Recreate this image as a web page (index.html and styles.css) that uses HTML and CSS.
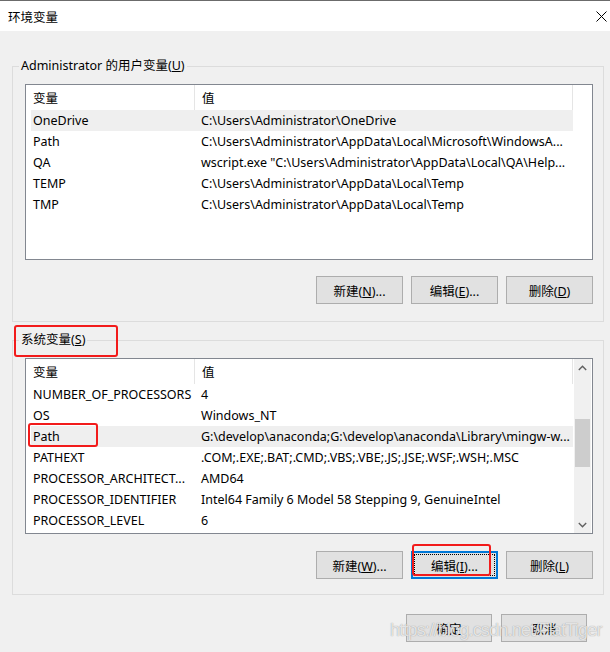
FILE: index.html
```html
<!DOCTYPE html>
<html lang="zh-CN">
<head>
  <meta charset="UTF-8">
  <title>环境变量</title>
  <link rel="stylesheet" href="styles.css">
</head>
<body>
<div class="window">
  <div class="titlebar">
    <span class="title">环境变量</span>
    <svg class="close" width="11" height="11" viewBox="0 0 11 11">
      <path d="M0.5 0.5 L10.5 10.5 M10.5 0.5 L0.5 10.5" stroke="#000" stroke-width="1" fill="none"/>
    </svg>
  </div>

  <div class="content">
    <fieldset class="group">
      <legend>Administrator 的用户变量(<u>U</u>)</legend>
      <div class="list">
        <div class="cols">
          <div class="head"><span>变量</span><span>值</span></div>
          <div class="row selected"><span>OneDrive</span><span>C:\Users\Administrator\OneDrive</span></div>
          <div class="row"><span>Path</span><span>C:\Users\Administrator\AppData\Local\Microsoft\WindowsA...</span></div>
          <div class="row"><span>QA</span><span>wscript.exe "C:\Users\Administrator\AppData\Local\QA\Help...</span></div>
          <div class="row"><span>TEMP</span><span>C:\Users\Administrator\AppData\Local\Temp</span></div>
          <div class="row"><span>TMP</span><span>C:\Users\Administrator\AppData\Local\Temp</span></div>
        </div>
      </div>
      <div class="buttons">
        <button class="btn">新建(<u>N</u>)...</button>
        <button class="btn">编辑(<u>E</u>)...</button>
        <button class="btn">删除(<u>D</u>)</button>
      </div>
    </fieldset>

    <fieldset class="group group-system">
      <legend>系统变量(<u>S</u>)</legend>
      <div class="list">
        <div class="cols">
          <div class="head"><span>变量</span><span>值</span></div>
          <div class="row"><span>NUMBER_OF_PROCESSORS</span><span>4</span></div>
          <div class="row"><span>OS</span><span>Windows_NT</span></div>
          <div class="row selected"><span>Path</span><span>G:\develop\anaconda;G:\develop\anaconda\Library\mingw-w...</span></div>
          <div class="row"><span>PATHEXT</span><span>.COM;.EXE;.BAT;.CMD;.VBS;.VBE;.JS;.JSE;.WSF;.WSH;.MSC</span></div>
          <div class="row"><span>PROCESSOR_ARCHITECT...</span><span>AMD64</span></div>
          <div class="row"><span>PROCESSOR_IDENTIFIER</span><span>Intel64 Family 6 Model 58 Stepping 9, GenuineIntel</span></div>
          <div class="row"><span>PROCESSOR_LEVEL</span><span>6</span></div>
        </div>
        <div class="scrollbar">
          <div class="arrow">
            <svg width="9" height="6" viewBox="0 0 9 6"><polyline points="0.8,5 4.5,1.3 8.2,5" stroke="#606060" stroke-width="1.4" fill="none"/></svg>
          </div>
          <div class="track"><div class="thumb"></div></div>
          <div class="arrow">
            <svg width="9" height="6" viewBox="0 0 9 6"><polyline points="0.8,1 4.5,4.7 8.2,1" stroke="#606060" stroke-width="1.4" fill="none"/></svg>
          </div>
        </div>
      </div>
      <div class="buttons">
        <button class="btn">新建(<u>W</u>)...</button>
        <button class="btn focused">编辑(<u>I</u>)...</button>
        <button class="btn">删除(<u>L</u>)</button>
      </div>
    </fieldset>

    <div class="buttons footer">
      <button class="btn">确定</button>
      <button class="btn">取消</button>
    </div>
  </div>

  <!-- red annotation boxes -->
  <div class="mark mark-system"></div>
  <div class="mark mark-path"></div>
  <div class="mark mark-edit"></div>

  <div class="watermark">https://blog.csdn.net/FlatTiger</div>
</div>
</body>
</html>
```

FILE: styles.css
```css
* {
  box-sizing: border-box;
}

body {
  margin: 0;
  font-family: "Noto Sans", "Noto Sans CJK SC", sans-serif;
  font-size: 12.5px;
  color: #000;
}

.window {
  position: relative;
  width: 610px;
  height: 652px;
  background: #f0f0f0;
  overflow: hidden;
}

.titlebar {
  height: 31px;
  border-top: 1px solid #6b6b6b;
  background: #fff;
  display: flex;
  align-items: center;
  justify-content: space-between;
  padding: 0 3px 0 8px;
}

.content {
  padding: 27px 6px 0 12px;
}

.group {
  margin: 0;
  min-width: 0;
  border: 1px solid #dcdcdc;
  padding: 10px 10px 17px 12px;
}

.group legend {
  padding: 0 2px;
  margin-left: -6px;
  line-height: 16px;
}

.group-system {
  margin-top: 10px;
  padding-bottom: 15px;
}

.group-system .buttons {
  margin-top: 17px;
}

.list {
  height: 176px;
  border: 1px solid #828790;
  background: #fff;
  display: flex;
}

.cols {
  width: 547px;
}

.head {
  display: grid;
  grid-template-columns: 169px 378px;
  height: 25px;
}

.head span {
  display: flex;
  align-items: center;
  padding-left: 7px;
  border-right: 1px solid #e5e5e5;
}

.row {
  display: grid;
  grid-template-columns: 164px 378px;
  margin-left: 5px;
  height: 21px;
  align-items: center;
}

.row span {
  white-space: nowrap;
  overflow: hidden;
}

.row span:first-child {
  padding-left: 2px;
}

.row span:last-child {
  padding-left: 6px;
}

.row.selected {
  background: #efefef;
}

.scrollbar {
  width: 17px;
  margin-left: auto;
  margin-right: 1px;
  background: #f0f0f0;
  display: flex;
  flex-direction: column;
}

.arrow {
  height: 17px;
  display: flex;
  align-items: center;
  justify-content: center;
}

.track {
  flex: 1;
  padding: 0 1px;
}

.thumb {
  margin-top: 43px;
  height: 48px;
  background: #cdcdcd;
}

.buttons {
  display: flex;
  justify-content: flex-end;
  gap: 8px;
  margin-top: 16px;
}

.btn {
  width: 87px;
  height: 28px;
  padding: 0;
  border: 1px solid #adadad;
  background: #e1e1e1;
  font-family: "Noto Sans", "Noto Sans CJK SC", sans-serif;
  font-size: 12.5px;
  color: #000;
}

.btn.focused {
  border-color: #0078d7;
  box-shadow: inset 0 0 0 1px #0078d7;
  outline: 1px dotted #000;
  outline-offset: -4px;
}

.footer {
  gap: 9px;
  margin-top: 19px;
  margin-right: 17px;
}

.footer .btn {
  width: 86px;
}

.mark {
  position: absolute;
  border: 2px solid #f21b1b;
  border-radius: 3px;
}

.mark-system {
  left: 14px;
  top: 325px;
  width: 104px;
  height: 32px;
}

.mark-path {
  left: 28px;
  top: 423px;
  width: 70px;
  height: 24px;
}

.mark-edit {
  left: 412px;
  top: 544px;
  width: 79px;
  height: 32px;
}

.watermark {
  position: absolute;
  left: 390px;
  top: 620px;
  font-family: "Liberation Sans", sans-serif;
  font-size: 18px;
  letter-spacing: -0.8px;
  color: rgba(255, 255, 255, 0.75);
  text-shadow: 0 0 1px rgba(110, 110, 110, 0.8);
}
```
